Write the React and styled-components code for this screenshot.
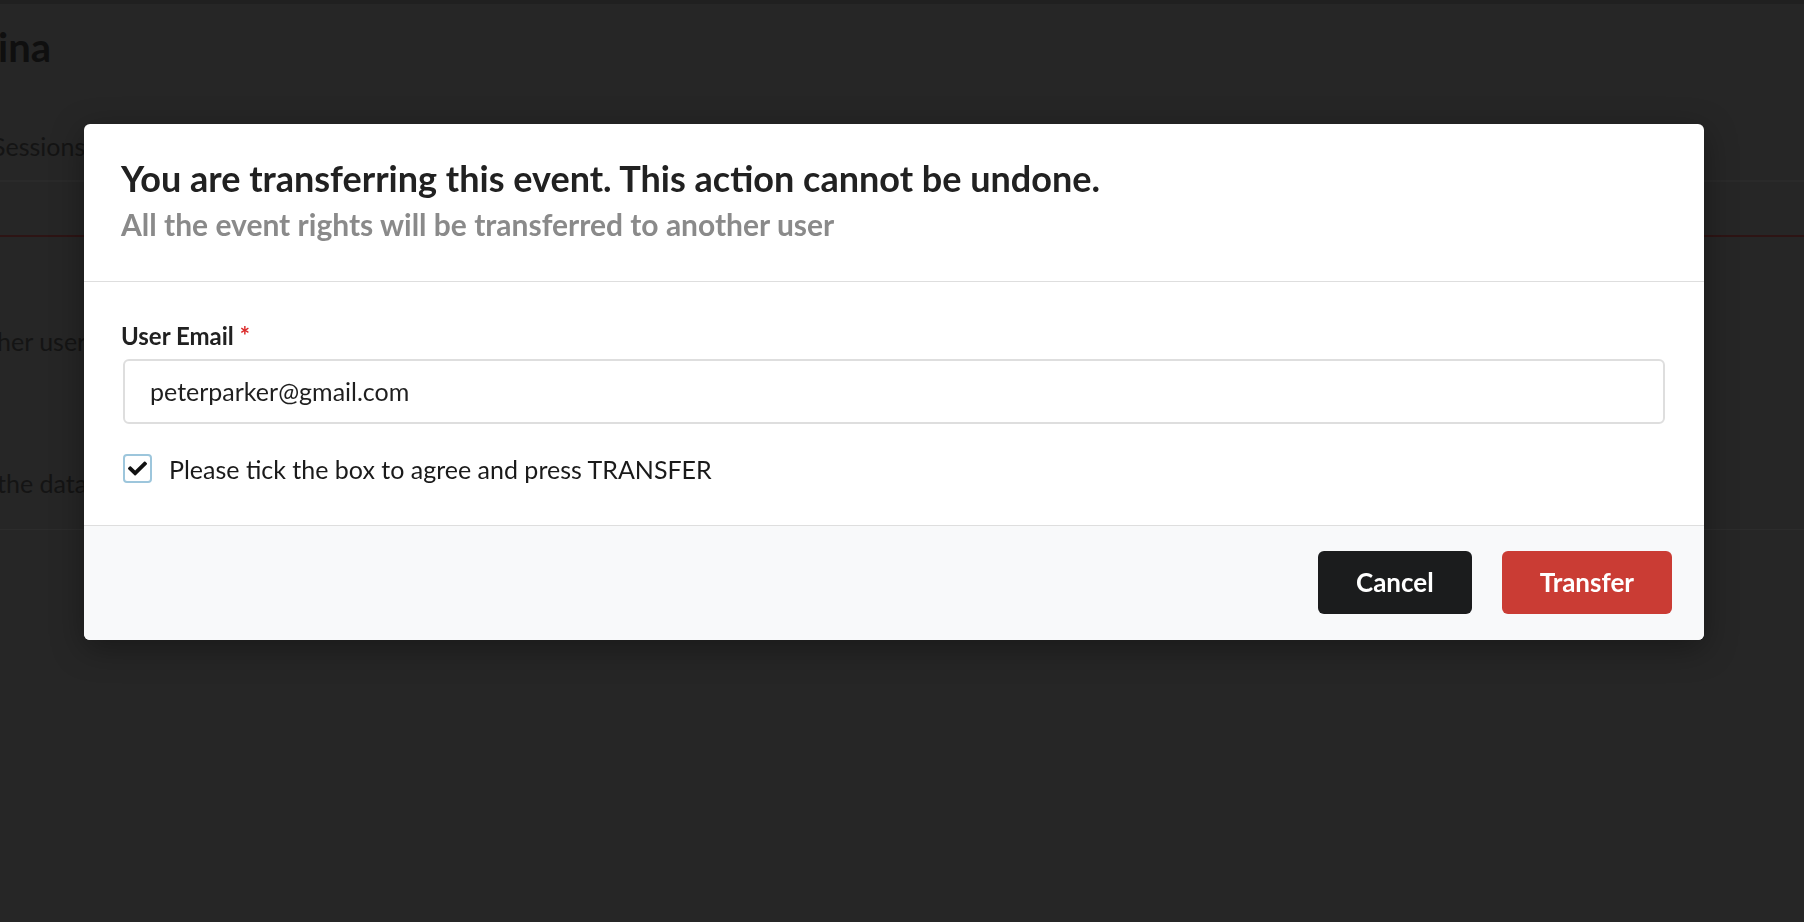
import React, { useState } from "react";
import styled, { createGlobalStyle } from "styled-components";
import { FaCheck } from "react-icons/fa";

const GlobalStyle = createGlobalStyle`
    html, body {
        margin: 0;
        padding: 0;
        background: #262626;
        font-family: Lato, "Open Sans", sans-serif;
        overflow: hidden;
    }
    * {
        box-sizing: border-box;
    }
`;

function App() {
    const [agreed, setAgreed] = useState(true);
    const [email, setEmail] = useState("peterparker@gmail.com");

    return (
        <>
            <GlobalStyle />
            <Page>
                <TopStrip />
                <PageTitle>ina</PageTitle>
                <Tabs>
                    <Tab>Sessions</Tab>
                </Tabs>
                <ActiveRule />
                <PageText $top={88}>her user</PageText>
                <PageText $top={110}>the data</PageText>
                <SectionRule />
            </Page>

            <Dimmer>
                <Modal>
                    <Header>
                        <Title>You are transferring this event. This action cannot be undone.</Title>
                        <Subtitle>All the event rights will be transferred to another user</Subtitle>
                    </Header>

                    <Body>
                        <Label>
                            User Email <Required>*</Required>
                        </Label>
                        <Input value={email} onChange={(e) => setEmail(e.target.value)} />

                        <CheckRow onClick={() => setAgreed(!agreed)}>
                            <Box>{agreed && <FaCheck />}</Box>
                            <span>Please tick the box to agree and press TRANSFER</span>
                        </CheckRow>
                    </Body>

                    <Footer>
                        <Button $variant="dark">Cancel</Button>
                        <Button $variant="red">Transfer</Button>
                    </Footer>
                </Modal>
            </Dimmer>
        </>
    );
}

const Page = styled.div`
    height: 922px;
    display: flex;
    flex-direction: column;
    color: #141414;
`;

const TopStrip = styled.div`
    height: 4px;
    background: #202020;
`;

const PageTitle = styled.h1`
    margin: 20px 0 0 -2px;
    font-size: 40px;
    font-weight: 700;
    line-height: 46px;
    color: #0f0f0f;
`;

const Tabs = styled.div`
    margin-top: 60px;
    height: 52px;
    display: flex;
    align-items: flex-start;
    border-bottom: 2px solid #2a2a2a;
`;

const Tab = styled.div`
    margin-left: -8px;
    font-size: 25px;
    line-height: 32px;
`;

const ActiveRule = styled.div`
    margin-top: 53px;
    height: 2px;
    background: #2d1414;
`;

const PageText = styled.div`
    margin-top: ${({ $top }) => $top}px;
    margin-left: -3px;
    font-size: 25px;
    line-height: 32px;
`;

const SectionRule = styled.div`
    margin-top: 30px;
    height: 1px;
    background: #2c2c2c;
`;

const Dimmer = styled.div`
    position: fixed;
    inset: 0;
    padding: 124px 100px 0 84px;
    display: flex;
    align-items: flex-start;
`;

const Modal = styled.div`
    width: 1620px;
    background: #fff;
    border-radius: 6px;
    overflow: hidden;
    box-shadow: 0 8px 32px rgba(0, 0, 0, 0.35);
`;

const Header = styled.div`
    padding: 36px 37px 39px;
    border-bottom: 1px solid #dedede;
`;

const Title = styled.h2`
    margin: 0;
    font-size: 36px;
    font-weight: 700;
    line-height: 1.05;
    color: #212121;
`;

const Subtitle = styled.div`
    margin-top: 8px;
    font-size: 30px;
    font-weight: 700;
    line-height: 1.2;
    color: #8a8a8a;
`;

const Body = styled.div`
    padding: 40px 39px 41px;
    display: flex;
    flex-direction: column;
`;

const Label = styled.label`
    margin-left: -2px;
    font-size: 24px;
    font-weight: 700;
    line-height: 1.2;
    color: #212121;
`;

const Required = styled.span`
    color: #db2828;
`;

const Input = styled.input`
    margin-top: 8px;
    height: 65px;
    padding: 0 25px;
    border: 2px solid #dedede;
    border-radius: 6px;
    font-family: Lato, sans-serif;
    font-size: 25px;
    color: #1f1f1f;
    outline: none;
`;

const CheckRow = styled.div`
    margin-top: 30px;
    display: flex;
    align-items: center;
    gap: 17px;
    font-size: 25px;
    color: #1a1a1a;
    cursor: pointer;
`;

const Box = styled.div`
    width: 29px;
    height: 29px;
    border: 2px solid #9dc6dc;
    border-radius: 4px;
    display: flex;
    align-items: center;
    justify-content: center;
    font-size: 19px;
    color: #111;
`;

const Footer = styled.div`
    border-top: 1px solid #dedede;
    background: #f8f9fa;
    padding: 25px 32px 26px;
    display: flex;
    justify-content: flex-end;
    gap: 30px;
`;

const Button = styled.button`
    height: 63px;
    padding: 0 38px;
    border: none;
    border-radius: 6px;
    font-family: Lato, sans-serif;
    font-size: 26px;
    font-weight: 700;
    color: #fff;
    background: ${({ $variant }) => ($variant === "red" ? "#ca3c34" : "#1b1c1d")};
    cursor: pointer;
`;

export default App;
